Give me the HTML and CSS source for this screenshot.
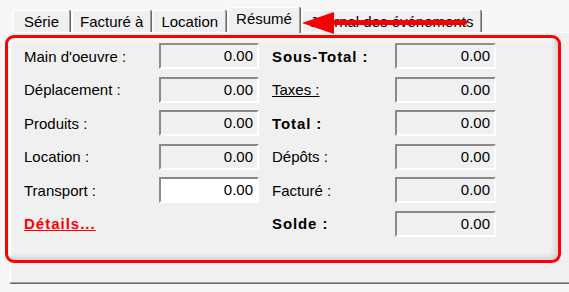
FILE: index.html
```html
<!DOCTYPE html>
<html>
  <head>
    <meta charset="UTF-8"/>
    <title>Résumé</title>
    <link rel="stylesheet" href="styles.css">
  </head>
  <body>
    <div class="window">
      <ul class="tabs">
        <li class="tab">Série</li>
        <li class="tab">Facturé à</li>
        <li class="tab">Location</li>
        <li class="tab active">Résumé</li>
        <li class="tab">Journal des événements</li>
      </ul>

      <section class="panel">
        <div class="form">
          <label>Main d'oeuvre :</label>
          <span class="field">0.00</span>
          <label class="strong">Sous-Total :</label>
          <span class="field">0.00</span>

          <label>Déplacement :</label>
          <span class="field">0.00</span>
          <label class="link">Taxes :</label>
          <span class="field">0.00</span>

          <label>Produits :</label>
          <span class="field">0.00</span>
          <label class="strong">Total :</label>
          <span class="field">0.00</span>

          <label>Location :</label>
          <span class="field">0.00</span>
          <label>Dépôts :</label>
          <span class="field">0.00</span>

          <label>Transport :</label>
          <span class="field editable">0.00</span>
          <label>Facturé :</label>
          <span class="field">0.00</span>

          <a class="details">Détails...</a>
          <span></span>
          <label class="strong">Solde :</label>
          <span class="field">0.00</span>
        </div>
      </section>

      <!-- annotation drawn over the screenshot -->
      <div class="highlight"></div>
      <svg class="arrow" width="172" height="26" viewBox="0 0 172 26">
        <polygon points="1,13 33,2 33,24" fill="#f40000"/>
        <rect x="30" y="10" width="136" height="5" rx="2" fill="#f40000"/>
      </svg>
    </div>
  </body>
</html>
```

FILE: styles.css
```css
html, body { padding: 0; margin: 0; }
body {
    background: #f7f7f7;
    font-family: "Liberation Sans", Arial, sans-serif;
    font-size: 15px;
    color: #000;
}
.window {
    position: relative;
    width: 569px;
    height: 292px;
    overflow: hidden;
}

/* tab strip */
.tabs {
    list-style: none;
    margin: 0;
    padding: 10px 0 0 13px;
    display: flex;
    align-items: flex-end;
    height: 22px;
}
.tab {
    box-sizing: border-box;
    min-width: 57px;
    height: 22px;
    line-height: 21px;
    text-align: center;
    padding: 0 7px;
    margin-right: 2px;
    background: #f0f0f0;
    border-top: 1px solid #fff;
    border-left: 1px solid #fff;
    border-right: 1px solid #a0a0a0;
    box-shadow: 1px 0 0 #696969;
    border-radius: 2px 2px 0 0;
}
.tab.active {
    height: 26px;
    margin-bottom: -1px;
    position: relative;
    z-index: 1;
    line-height: 22px;
}

/* page */
.panel {
    margin-left: 10px;
    height: 249px;
    background: #f0f0f0;
    border-top: 1px solid #fff;
    border-left: 1px solid #fff;
    border-bottom: 1px solid #a0a0a0;
    box-shadow: 0 1px 0 #696969;
}
.form {
    display: grid;
    grid-template-columns: 135px 100px 136px 101px;
    grid-auto-rows: 26px;
    row-gap: 7.6px;
    align-items: center;
    padding: 10px 0 0 13px;
}
.form label, .details { white-space: nowrap; }
.form label:nth-child(4n+3) { padding-left: 13px; }
.strong { font-weight: bold; letter-spacing: 0.9px; }
.link { text-decoration: underline; }
.details {
    color: #f00;
    font-weight: bold;
    letter-spacing: 1px;
    text-decoration: underline;
}
.field {
    box-sizing: border-box;
    height: 26px;
    line-height: 22px;
    text-align: right;
    padding-right: 4px;
    background: #f0f0f0;
    border-top: 2px solid #8a8a8a;
    border-left: 2px solid #8a8a8a;
    border-bottom: 2px solid #fff;
    border-right: 2px solid #fff;
}
.field.editable { background: #fff; }

/* annotation */
.highlight {
    position: absolute;
    left: 5px;
    top: 35px;
    width: 550px;
    height: 222px;
    border: 3px solid #f00;
    border-radius: 9px;
    box-shadow: inset -3px -3px 5px rgba(0, 0, 0, 0.12), inset 3px 3px 4px rgba(255, 255, 255, 0.6);
}
.arrow {
    position: absolute;
    left: 301px;
    top: 10px;
}
```
